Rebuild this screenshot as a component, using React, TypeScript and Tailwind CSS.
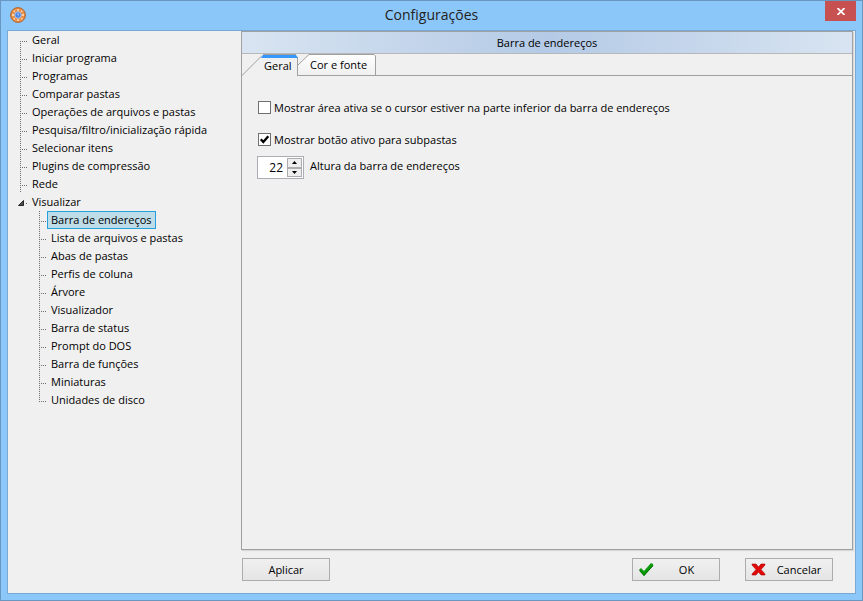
import React, { useState } from "react";

const topItems = [
    "Geral",
    "Iniciar programa",
    "Programas",
    "Comparar pastas",
    "Operações de arquivos e pastas",
    "Pesquisa/filtro/inicialização rápida",
    "Selecionar itens",
    "Plugins de compressão",
    "Rede",
];

const viewItems = [
    "Barra de endereços",
    "Lista de arquivos e pastas",
    "Abas de pastas",
    "Perfis de coluna",
    "Árvore",
    "Visualizador",
    "Barra de status",
    "Prompt do DOS",
    "Barra de funções",
    "Miniaturas",
    "Unidades de disco",
];

const AppIcon = () => (
    <svg width="16" height="16" viewBox="0 0 16 16" aria-hidden="true">
        <circle cx="8" cy="8" r="7.5" fill="#e07a2c" stroke="#a8734e" />
        <circle cx="8" cy="8" r="5.6" fill="none" stroke="#f09a50" strokeWidth="1.5" />
        <path d="M8 2v2M8 12v2M2 8h2M12 8h2M3.800 3.800l1 1M12.200 3.800l-1 1M3.800 12.200l1-1M12.200 12.200l-1-1" stroke="#fbe3cd" strokeWidth="1.3" />
        <circle cx="8" cy="8" r="3.8" fill="#b9c6de" />
        <circle cx="8" cy="8" r="2.7" fill="#4a86ea" />
        <path d="M8 6v2h1" fill="none" stroke="#a9c9ff" />
    </svg>
);

// dotted connectors: one dot every two pixels
const Branch = ({ first = false, last = false }: { first?: boolean; last?: boolean }) => (
    <svg width="8" height="18" viewBox="0 0 8 18" className="shrink-0" aria-hidden="true">
        <path
            d={first ? "M.5 10V18" : last ? "M.5 0V11" : "M.5 0V18"}
            stroke="#6e6e6e"
            strokeDasharray="1 1"
            shapeRendering="crispEdges"
        />
        <path d="M0 10.500H8" stroke="#6e6e6e" strokeDasharray="1 1" shapeRendering="crispEdges" />
    </svg>
);

const Tree = () => {
    const [selected, setSelected] = useState("Barra de endereços");

    const renderItem = (name: string) => (
        <button
            type="button"
            onClick={() => setSelected(name)}
            className={
                name === selected
                    ? "h-[18px] border border-[#26a0da] bg-[#bfdde9] px-[3px] leading-4 whitespace-nowrap"
                    : "h-[18px] border border-transparent px-[3px] leading-4 whitespace-nowrap"
            }
        >
            {name}
        </button>
    );

    return (
        <nav className="w-[233px] shrink-0 pl-3">
            <ul>
                {topItems.map((name, i) => (
                    <li key={name} className="flex h-[18px]">
                        <Branch first={i === 0} />
                        {renderItem(name)}
                    </li>
                ))}
                <li>
                    <div className="flex h-[18px]">
                        <svg width="12" height="18" viewBox="0 0 12 18" className="-ml-1 shrink-0" aria-hidden="true">
                            <path d="M7.500 7.500V12.500H2.500z" fill="#505050" stroke="#262626" />
                            <path d="M10 10.500h1" stroke="#6e6e6e" />
                        </svg>
                        {renderItem("Visualizar")}
                    </div>
                    <ul className="pl-[19px]">
                        {viewItems.map((name, i) => (
                            <li key={name} className="flex h-[18px]">
                                <Branch last={i === viewItems.length - 1} />
                                {renderItem(name)}
                            </li>
                        ))}
                    </ul>
                </li>
            </ul>
        </nav>
    );
};

const Tabs = () => (
    <div role="tablist" className="flex h-[22px] border-b border-[#a0a0a0]">
        <button type="button" role="tab" aria-selected="true" className="relative -mb-px h-[22px] w-14 pt-px pl-[22px] text-left">
            <svg width="56" height="22" viewBox="0 0 56 22" className="absolute inset-0" aria-hidden="true">
                <path d="M0 22L20 1H54L56 3V22z" fill="#f0f0f0" />
                <path d="M0 21.500L20 1.500" stroke="#a0a0a0" fill="none" />
                <path d="M55.500 3V22" stroke="#a0a0a0" />
                <path d="M19 4L21 1H54L56 4z" fill="#3399ff" />
                <path d="M21 .5H54" stroke="#a0a0a0" />
            </svg>
            <span className="relative">Geral</span>
        </button>
        <button type="button" role="tab" aria-selected="false" className="relative h-[21px] w-[78px] pt-px pl-3 text-left">
            <svg width="78" height="21" viewBox="0 0 78 21" className="absolute inset-0" aria-hidden="true">
                <defs>
                    <linearGradient id="tab-fill" x1="0" y1="0" x2="0" y2="1">
                        <stop offset="0" stopColor="#ffffff" />
                        <stop offset="1" stopColor="#f0f0f0" />
                    </linearGradient>
                </defs>
                <path d="M0 11L11 .5H76L77.500 2V21H0z" fill="url(#tab-fill)" />
                <path d="M0 11L11 .5H76L77.500 2V21" fill="none" stroke="#a0a0a0" />
            </svg>
            <span className="relative">Cor e fonte</span>
        </button>
    </div>
);

const CheckBox = ({ label, on }: { label: string; on: boolean }) => {
    const [checked, setChecked] = useState(on);
    return (
        <label className="flex h-4 items-start gap-[3px]">
            <span className="relative mt-px flex size-[13px]">
                <input
                    type="checkbox"
                    checked={checked}
                    onChange={(e) => setChecked(e.target.checked)}
                    className="size-[13px] appearance-none border border-[#707070] bg-white"
                />
                {checked && (
                    <svg width="13" height="13" viewBox="0 0 13 13" className="pointer-events-none absolute inset-0" aria-hidden="true">
                        <path d="M2.800 6.200L5.300 9L10.300 3.200" fill="none" stroke="#000" strokeWidth="2.300" />
                    </svg>
                )}
            </span>
            {label}
        </label>
    );
};

const HeightField = () => {
    const [value, setValue] = useState(22);
    return (
        <div className="flex items-start gap-[6px]">
            <div className="flex h-[23px] w-[47px] border border-[#abadb3] bg-white p-px">
                <input
                    id="bar-height"
                    type="text"
                    value={value}
                    onChange={(e) => setValue(Number(e.target.value) || 0)}
                    className="w-7 min-w-0 bg-white pr-1 text-right text-[12px] outline-none"
                />
                <div className="flex flex-1 flex-col">
                    <button type="button" aria-label="+" onClick={() => setValue(value + 1)} className="flex flex-1 items-center justify-center border border-[#acacac] bg-[#eeeeee]">
                        <svg width="5" height="3" viewBox="0 0 5 3" aria-hidden="true">
                            <path d="M0 3L2.500 0L5 3z" />
                        </svg>
                    </button>
                    <button type="button" aria-label="-" onClick={() => setValue(value - 1)} className="flex flex-1 items-center justify-center border border-[#acacac] bg-[#eeeeee]">
                        <svg width="5" height="3" viewBox="0 0 5 3" aria-hidden="true">
                            <path d="M0 0L2.500 3L5 0z" />
                        </svg>
                    </button>
                </div>
            </div>
            <label htmlFor="bar-height" className="pt-[2px]">Altura da barra de endereços</label>
        </div>
    );
};

const buttonClass =
    "flex h-[23px] w-[88px] items-center border border-[#acacac] bg-linear-to-b from-[#f0f0f0] to-[#e5e5e5]";

const App = () => {
    return (
        <div className="flex h-screen flex-col border border-[#6a97bf] bg-[#8cc7fa] px-[6px] pb-[6px] font-['Open_Sans',sans-serif] text-[11px] leading-4 text-black">
            <header className="flex h-[29px] shrink-0 items-start">
                <span className="w-[31px] pt-[6px] pl-[3px]">
                    <AppIcon />
                </span>
                <h1 className="flex-1 pt-1 text-center text-[14px] leading-5 text-[#222]">Configurações</h1>
                <button type="button" aria-label="Fechar" className="flex h-5 w-[31px] items-center justify-center bg-[#c75050]">
                    <svg width="8" height="7" viewBox="0 0 8 7" aria-hidden="true">
                        <path d="M.5 0L7.500 7M7.500 0L.5 7" stroke="#fff" strokeWidth="1.700" />
                    </svg>
                </button>
            </header>
            <div className="flex min-h-0 flex-1 border border-[#7aa9d3] bg-[#f0f0f0]">
                <Tree />
                <main className="flex min-w-0 flex-1 flex-col pr-[2px]">
                    <section className="flex flex-1 flex-col border border-[#a0a0a0] shadow-[1px_1px_1px_#d8d8d8]">
                        <h2 className="h-[22px] shrink-0 border-b border-[#b8b8b8] bg-linear-to-r from-[#d8e4f1] via-[#b4cae6] to-[#d8e4f1] pt-[3px] text-center">
                            Barra de endereços
                        </h2>
                        <Tabs />
                        <div className="flex flex-col px-[15px] pt-6">
                            <div className="flex flex-col gap-4 pl-px">
                                <CheckBox label="Mostrar área ativa se o cursor estiver na parte inferior da barra de endereços" on={false} />
                                <CheckBox label="Mostrar botão ativo para subpastas" on={true} />
                            </div>
                            <div className="pt-2">
                                <HeightField />
                            </div>
                        </div>
                    </section>
                    <footer className="flex h-[43px] shrink-0 items-start pt-2 pr-5 pl-px">
                        <button type="button" className={buttonClass + " justify-center"}>
                            Aplicar
                        </button>
                        <div className="ml-auto flex gap-[25px]">
                            <button type="button" className={buttonClass}>
                                <svg width="16" height="15" viewBox="0 0 16 15" className="ml-[5px]" aria-hidden="true">
                                    <path d="M1 8l2-2 3 3 7-8 2 1v2L6 14z" fill="#0a9a0a" />
                                    <path d="M1.500 8.500L6 13.500L15 3.500" fill="none" stroke="#067006" />
                                </svg>
                                <span className="flex-1">OK</span>
                            </button>
                            <button type="button" className={buttonClass}>
                                <svg width="15" height="13" viewBox="0 0 15 13" className="ml-[5px]" aria-hidden="true">
                                    <path d="M1 1h4l2.500 3L10 1h4v1l-4 4.500L14 11v1h-4L7.500 9L5 12H1v-1l4-4.500L1 2z" fill="#e00808" stroke="#b00404" strokeWidth=".6" />
                                </svg>
                                <span className="flex-1">Cancelar</span>
                            </button>
                        </div>
                    </footer>
                </main>
            </div>
        </div>
    );
};

export default App;
